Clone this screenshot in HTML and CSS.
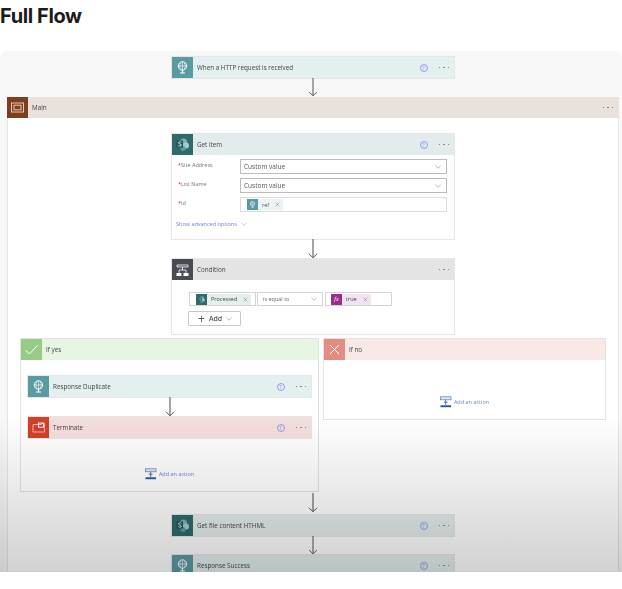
FILE: index.html
```html
<!DOCTYPE html>
<html lang="en">
<head>
    <meta charset="UTF-8">
    <meta name="viewport" content="width=device-width, initial-scale=1.0">
    <title>Full Flow</title>
    <link rel="stylesheet" href="styles.css">
</head>
<body>
    <svg class="icon-defs" xmlns="http://www.w3.org/2000/svg">
        <symbol id="i-request" viewBox="0 0 21 21">
            <circle cx="10.5" cy="9" r="4.2" fill="none" stroke="#fff" stroke-width="1"/>
            <path d="M10.5 4.8v8.4M6.6 9h7.8M8.6 5.6c-1 2-1 4.800 0 6.800M12.400 5.600c1 2 1 4.800 0 6.800" fill="none" stroke="#fff" stroke-width=".6"/>
            <path d="M10.500 13.200v2.300M8 16h5" stroke="#fff" stroke-width="1.100" fill="none"/>
        </symbol>
        <symbol id="i-sharepoint" viewBox="0 0 21 21">
            <circle cx="11.500" cy="8" r="3.600" fill="#7fb0b0"/>
            <circle cx="14" cy="11.500" r="3" fill="#a5cccc"/>
            <circle cx="11" cy="14.500" r="2.500" fill="#5f9c9c"/>
            <rect x="4.500" y="6.500" width="6.500" height="7" fill="#1f5757"/>
            <path d="M9.300 8.300c-.8-.7-2.800-.6-2.800.6 0 1.300 2.900.9 2.900 2.200 0 1.200-2.100 1.300-3.100.6" fill="none" stroke="#fff" stroke-width=".8"/>
        </symbol>
        <symbol id="i-scope" viewBox="0 0 21 21">
            <rect x="4.500" y="6" width="12" height="9" fill="none" stroke="#e6cbb4" stroke-width="1"/>
            <rect x="7" y="8.200" width="7" height="4.600" fill="none" stroke="#e6cbb4" stroke-width="1"/>
        </symbol>
        <symbol id="i-condition" viewBox="0 0 21 21">
            <path d="M5 6h11v2H5z" fill="none" stroke="#fff" stroke-width=".8"/>
            <path d="M10.500 8v3M7 14v-3h7v3" fill="none" stroke="#fff" stroke-width=".8"/>
            <path d="M4.500 14h5v3h-5zM11.500 14h5v3h-5z" fill="#fff"/>
        </symbol>
        <symbol id="i-terminate" viewBox="0 0 21 21">
            <path d="M5 7.500h8.500V6.500h3v8.500H5z" fill="none" stroke="#f3c2b8" stroke-width=".9"/>
            <rect x="10.500" y="6" width="5" height="4.200" fill="none" stroke="#fff" stroke-width=".9"/>
        </symbol>
        <symbol id="i-add-action" viewBox="0 0 12 12">
            <rect x=".5" y=".8" width="10.500" height="3" fill="#dfe6f2" stroke="#5b7db5" stroke-width=".7"/>
            <path d="M5.700 3.800v5.200M3.800 6.200h3.800" fill="none" stroke="#2b579a" stroke-width=".8"/>
            <rect x=".5" y="9.300" width="10.500" height="1.900" fill="#2b579a"/>
        </symbol>
        <symbol id="i-arrow" viewBox="0 0 10 20">
            <path d="M5 0v18.500" fill="none" stroke="#666" stroke-width="1.200"/>
            <path d="M1 14.800l4 4 4-4" fill="none" stroke="#555" stroke-width="1"/>
        </symbol>
        <symbol id="i-chevron" viewBox="0 0 8 5">
            <path d="M.5.800L4 4.200 7.500.800" fill="none" stroke="currentColor" stroke-width=".8"/>
        </symbol>
        <symbol id="i-close" viewBox="0 0 8 8">
            <path d="M1 1l6 6M7 1L1 7" fill="none" stroke="currentColor" stroke-width=".8"/>
        </symbol>
    </svg>

    <h1 class="page-title">Full Flow</h1>

    <div class="canvas">
        <div class="card card-request">
            <div class="card-head">
                <span class="card-icon"><svg><use href="#i-request"/></svg></span>
                <span class="card-title">When a HTTP request is received</span>
                <span class="help">?</span>
                <span class="dots"><i></i><i></i><i></i></span>
            </div>
        </div>
        <svg class="arrow arrow-first"><use href="#i-arrow"/></svg>

        <div class="scope">
            <div class="card-head scope-head">
                <span class="card-icon"><svg><use href="#i-scope"/></svg></span>
                <span class="card-title">Main</span>
                <span class="dots"><i></i><i></i><i></i></span>
            </div>

            <div class="scope-body">
                <div class="card card-sharepoint">
                    <div class="card-head">
                        <span class="card-icon"><svg><use href="#i-sharepoint"/></svg></span>
                        <span class="card-title">Get item</span>
                        <span class="help">?</span>
                        <span class="dots"><i></i><i></i><i></i></span>
                    </div>
                    <div class="form">
                        <div class="form-row">
                            <label><b>*</b>Site Address</label>
                            <div class="select">Custom value<svg class="chevron"><use href="#i-chevron"/></svg></div>
                        </div>
                        <div class="form-row">
                            <label><b>*</b>List Name</label>
                            <div class="select">Custom value<svg class="chevron"><use href="#i-chevron"/></svg></div>
                        </div>
                        <div class="form-row">
                            <label><b>*</b>Id</label>
                            <div class="select select-light">
                                <span class="chip chip-request">
                                    <span class="chip-icon"><svg><use href="#i-request"/></svg></span>
                                    ref
                                    <svg class="chip-close"><use href="#i-close"/></svg>
                                </span>
                            </div>
                        </div>
                        <div class="advanced">Show advanced options<svg class="chevron"><use href="#i-chevron"/></svg></div>
                    </div>
                </div>
                <svg class="arrow"><use href="#i-arrow"/></svg>

                <div class="card card-condition">
                    <div class="card-head">
                        <span class="card-icon"><svg><use href="#i-condition"/></svg></span>
                        <span class="card-title">Condition</span>
                        <span class="dots"><i></i><i></i><i></i></span>
                    </div>
                    <div class="condition-body">
                        <div class="condition-row">
                            <div class="field field-left">
                                <span class="chip chip-sharepoint">
                                    <span class="chip-icon"><svg><use href="#i-sharepoint"/></svg></span>
                                    Processed
                                    <svg class="chip-close"><use href="#i-close"/></svg>
                                </span>
                            </div>
                            <div class="field field-op">is equal to<svg class="chevron"><use href="#i-chevron"/></svg></div>
                            <div class="field field-right">
                                <span class="chip chip-expr">
                                    <span class="chip-icon chip-fx">fx</span>
                                    true
                                    <svg class="chip-close"><use href="#i-close"/></svg>
                                </span>
                            </div>
                        </div>
                        <div class="add-btn"><span class="plus">+</span>Add<svg class="chevron"><use href="#i-chevron"/></svg></div>
                    </div>
                </div>

                <div class="branches">
                    <div class="branch branch-yes">
                        <div class="card-head">
                            <span class="card-icon"><svg class="mark" viewBox="0 0 21 21"><path d="M4.500 11l4 4 8-8.500" fill="none" stroke="#fff" stroke-width="1"/></svg></span>
                            <span class="card-title">If yes</span>
                        </div>
                        <div class="branch-body">
                            <div class="card card-request">
                                <div class="card-head">
                                    <span class="card-icon"><svg><use href="#i-request"/></svg></span>
                                    <span class="card-title">Response Duplicate</span>
                                    <span class="help">?</span>
                                    <span class="dots"><i></i><i></i><i></i></span>
                                </div>
                            </div>
                            <svg class="arrow"><use href="#i-arrow"/></svg>
                            <div class="card card-terminate">
                                <div class="card-head">
                                    <span class="card-icon"><svg><use href="#i-terminate"/></svg></span>
                                    <span class="card-title">Terminate</span>
                                    <span class="help">?</span>
                                    <span class="dots"><i></i><i></i><i></i></span>
                                </div>
                            </div>
                            <div class="add-action add-action-yes"><svg><use href="#i-add-action"/></svg>Add an action</div>
                        </div>
                    </div>
                    <div class="branch branch-no">
                        <div class="card-head">
                            <span class="card-icon"><svg class="mark" viewBox="0 0 21 21"><path d="M6 6l9 9M15 6l-9 9" fill="none" stroke="#fff" stroke-width="1"/></svg></span>
                            <span class="card-title">If no</span>
                        </div>
                        <div class="branch-body">
                            <div class="add-action add-action-no"><svg><use href="#i-add-action"/></svg>Add an action</div>
                        </div>
                    </div>
                </div>

                <svg class="arrow arrow-long"><use href="#i-arrow"/></svg>
                <div class="card card-sharepoint">
                    <div class="card-head">
                        <span class="card-icon"><svg><use href="#i-sharepoint"/></svg></span>
                        <span class="card-title">Get file content HTHML</span>
                        <span class="help">?</span>
                        <span class="dots"><i></i><i></i><i></i></span>
                    </div>
                </div>
                <svg class="arrow arrow-short"><use href="#i-arrow"/></svg>
                <div class="card card-request">
                    <div class="card-head">
                        <span class="card-icon"><svg><use href="#i-request"/></svg></span>
                        <span class="card-title">Response Success</span>
                        <span class="help">?</span>
                        <span class="dots"><i></i><i></i><i></i></span>
                    </div>
                </div>
            </div>
        </div>
    </div>
</body>
</html>
```

FILE: styles.css
```css
* {
    box-sizing: border-box;
}
body {
    margin: 0;
    background-color: #fff;
    font-family: "Open Sans", "Liberation Sans", sans-serif;
    color: #444;
    overflow: hidden;
}
.icon-defs {
    display: none;
}
.page-title {
    margin: 0;
    height: 51px;
    padding-top: 4px;
    font-family: Inter, "Liberation Sans", sans-serif;
    font-size: 20px;
    line-height: 24px;
    font-weight: 700;
    letter-spacing: -0.4px;
    color: #1c1c1c;
}
.canvas {
    position: relative;
    height: 521px;
    padding: 6px 3px 0 7px;
    display: flex;
    flex-direction: column;
    align-items: center;
    background-color: #f8f8f8;
    border-radius: 8px 8px 0 0;
    overflow: hidden;
}
.canvas > * {
    filter: blur(0.5px);
}
/* darker fade at the bottom of the frame */
.canvas::after {
    content: "";
    position: absolute;
    inset: 0;
    background: linear-gradient(to bottom, rgba(0,0,0,0) 70%, rgba(0,0,0,0.18) 100%);
    pointer-events: none;
}

/* cards */
.card {
    width: 282px;
    flex-shrink: 0;
    background-color: #fff;
    box-shadow: 0 0 0 1px #e6e6e6;
}
.card-head {
    display: flex;
    align-items: center;
    height: 21px;
    background-color: var(--head);
}
.card-icon {
    width: 21px;
    height: 21px;
    flex-shrink: 0;
    background-color: var(--icon);
}
.card-icon svg {
    display: block;
    width: 21px;
    height: 21px;
}
.card-title {
    flex: 1;
    padding-left: 4px;
    font-size: 6.3px;
    line-height: 21px;
    white-space: nowrap;
}
.help {
    width: 8px;
    height: 8px;
    margin-right: 11px;
    border: 0.8px solid #929bee;
    border-radius: 50%;
    font-size: 5.5px;
    line-height: 6.5px;
    text-align: center;
    color: #7b83eb;
}
.dots {
    display: flex;
    gap: 3px;
    margin-right: 5px;
}
.dots i {
    width: 1.5px;
    height: 1.5px;
    background-color: #888;
}
.card-request { --head: #e4eff0; --icon: #5a9aa1; }
.card-sharepoint { --head: #e3ecec; --icon: #2f6a6c; }
.card-condition { --head: #e4e4e4; --icon: #484c52; }
.card-terminate { --head: #f4dedb; --icon: #d1402b; }
.scope { --head: #e9e1dc; --icon: #7d3f1f; }
.branch-yes { --head: #e9f5e4; --icon: #97cb87; }
.branch-no { --head: #f9e9e6; --icon: #e38d82; }

/* arrows between steps */
.arrow {
    display: block;
    width: 10px;
    height: 20px;
    flex-shrink: 0;
}
.arrow-first {
    height: 19px;
}
.arrow-long {
    height: 24px;
}
.arrow-short {
    height: 19px;
}

/* main scope */
.scope {
    width: 612px;
    flex-shrink: 0;
    background-color: #fff;
    box-shadow: inset 0 0 0 1px #e6e6e6;
}
.scope-head .dots {
    margin-right: 6px;
}
.scope-body {
    display: flex;
    flex-direction: column;
    align-items: center;
    padding-top: 16px;
}

/* get item form */
.form {
    height: 84px;
    padding: 4px 7px 0 4px;
}
.form-row {
    display: flex;
    align-items: center;
    margin-bottom: 4px;
}
.form-row label {
    width: 64px;
    padding-left: 2px;
    margin-top: -4px;
    font-size: 5.5px;
    color: #777;
}
.form-row label b {
    color: #c33;
    font-weight: 400;
}
.select {
    display: flex;
    align-items: center;
    justify-content: space-between;
    width: 207px;
    height: 15px;
    padding: 0 5px 0 3px;
    border: 1px solid #bcbcbc;
    font-size: 6.5px;
    color: #555;
}
.select-light {
    justify-content: flex-start;
    padding-left: 6px;
    border-color: #dcdcdc;
}
.chevron {
    display: block;
    width: 6px;
    height: 4px;
    color: #888;
}
.advanced {
    display: flex;
    align-items: center;
    gap: 4px;
    margin-top: 8px;
    font-size: 5.5px;
    color: #6d7fdc;
}
.advanced .chevron {
    color: #8a97e2;
}

/* tokens */
.chip {
    display: flex;
    align-items: center;
    height: 11px;
    padding-right: 3px;
    font-size: 5.5px;
    background-color: var(--chip);
}
.chip-icon {
    display: block;
    width: 11px;
    height: 11px;
    margin-right: 4px;
    background-color: var(--icon);
}
.chip-icon svg {
    display: block;
    width: 11px;
    height: 11px;
}
.chip-close {
    display: block;
    width: 5px;
    height: 5px;
    margin-left: 6px;
    color: #777;
}
.chip-request { --chip: #edf3f4; --icon: #5a9aa1; }
.chip-sharepoint { --chip: #e7eeee; --icon: #2f6a6c; }
.chip-expr { --chip: #f3e3f1; --icon: #9a2d8c; }
.chip-fx {
    font-family: "Liberation Serif", serif;
    font-style: italic;
    font-size: 6px;
    line-height: 11px;
    text-align: center;
    color: #fff;
}

/* condition */
.condition-body {
    height: 54px;
    padding: 12px 0 0 17px;
}
.condition-row {
    display: flex;
    gap: 1px;
}
.field {
    display: flex;
    align-items: center;
    height: 14px;
    border: 1px solid #d4d4d4;
    font-size: 5.5px;
}
.field-left {
    width: 67px;
    padding-left: 6px;
}
.field-op {
    width: 66px;
    justify-content: space-between;
    padding: 0 5px;
    color: #666;
}
.field-right {
    width: 67px;
    margin-left: 1px;
    padding-left: 5px;
}
.add-btn {
    display: flex;
    align-items: center;
    width: 53px;
    height: 15px;
    margin-top: 5px;
    margin-left: -1px;
    padding-left: 9px;
    border: 1px solid #c8c8c8;
    border-radius: 1px;
    font-size: 7px;
    font-weight: 600;
    color: #555;
}
.plus {
    margin-right: 4px;
    font-size: 12px;
    font-weight: 400;
    line-height: 13px;
}
.add-btn .chevron {
    margin-left: 4px;
}

/* yes and no branches */
.branches {
    display: grid;
    grid-template-columns: 297px 281px;
    gap: 6px;
    align-items: start;
    align-self: flex-start;
    margin: 5px 0 0 14px;
}
.branch {
    background-color: #fff;
    box-shadow: 0 0 0 1px #e2e2e2;
}
.branch-body {
    display: flex;
    flex-direction: column;
    align-items: center;
    height: 131px;
    padding-top: 16px;
}
.branch-no .branch-body {
    height: 59px;
    padding-top: 0;
}
.branch-yes .card {
    width: 283px;
}
.add-action {
    display: flex;
    align-items: center;
    gap: 2px;
    font-size: 5.5px;
    color: #6d7fdc;
}
.add-action svg {
    display: block;
    width: 12px;
    height: 12px;
}
.add-action-yes {
    margin-top: 30px;
}
.add-action-no {
    margin-top: 36px;
}
.mark {
    display: block;
}
```
